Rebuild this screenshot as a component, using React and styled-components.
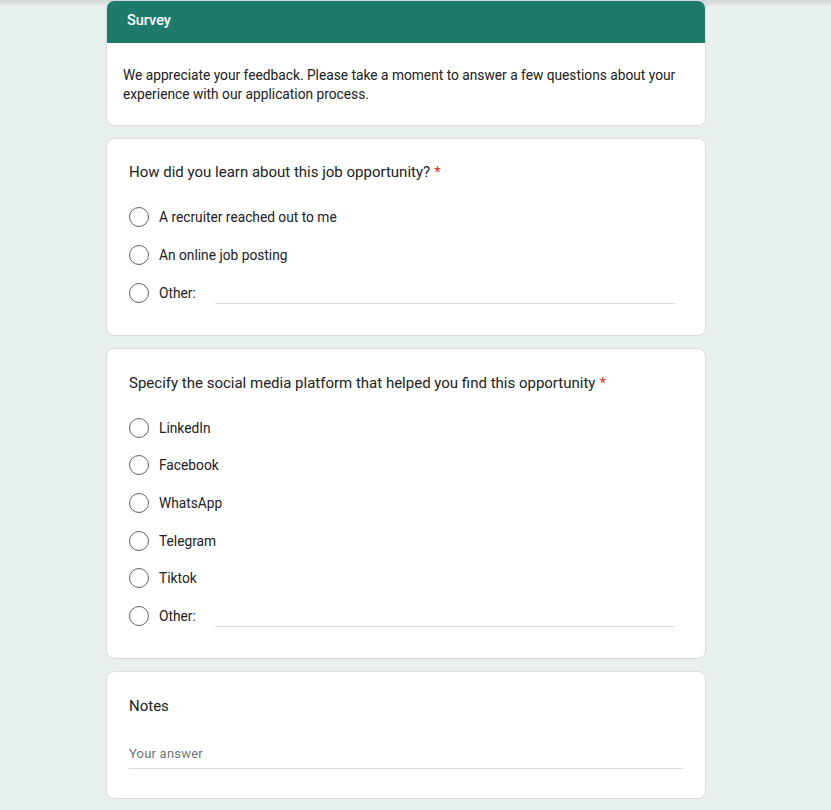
import React from 'react'
import styled, { createGlobalStyle } from 'styled-components'

const GlobalStyle = createGlobalStyle`
  html {
    background: #e8f0ef linear-gradient(#cfd6d5 0, #e8f0ef 7px) no-repeat;
    min-height: 100%;
  }
  body {
    margin: 0;
    padding: 0;
    font-family: Roboto, "Liberation Sans", Arial, sans-serif;
    color: #202124;
  }
`

const Page = styled.div`
  width: 600px;
  margin-left: 106px;
  display: flex;
  flex-direction: column;
  gap: 12px;
  padding-bottom: 12px;
`

const Card = styled.div`
  background: #fff;
  border: 1px solid #dadce0;
  border-radius: 8px;
  box-sizing: border-box;
  overflow: hidden;
`

const HeaderBar = styled.div`
  background: #1e7b6b;
  color: #fff;
  height: 43px;
  display: flex;
  align-items: center;
  padding: 0 21px 2px;
  box-sizing: border-box;
  font-size: 14.5px;
  font-weight: 500;
  margin: -1px -1px 0;
`

const Description = styled.p`
  margin: 0;
  padding: 23px 16px 21px;
  font-size: 13.75px;
  line-height: 19px;
  color: #202124;
`

const Question = styled(Card)`
  padding: ${p => p.$top || 23}px 22px ${p => p.$bottom || 23}px;
`

const Title = styled.div`
  font-size: 15px;
  line-height: 20px;
  color: #202124;
  margin-bottom: ${p => p.$gap || 15}px;
`

const Star = styled.span`
  color: #d93025;
  margin-left: 4px;
`

const Options = styled.div`
  display: flex;
  flex-direction: column;
`

const Option = styled.label`
  display: flex;
  align-items: center;
  height: ${p => p.$h || 38}px;
  font-size: 13.75px;
  color: #202124;
`

const Radio = styled.span`
  width: 20px;
  height: 20px;
  box-sizing: border-box;
  border: 1.6px solid #5f6368;
  border-radius: 50%;
  margin-right: 10px;
  flex-shrink: 0;
`

const OtherLine = styled.span`
  flex: 1;
  align-self: stretch;
  margin: 0 8px 8px 19px;
  border-bottom: 1px solid #dadce0;
`

const Answer = styled.div`
  margin-top: 30px;
  padding-bottom: 7px;
  border-bottom: 1px solid #dadce0;
  font-size: 13px;
  color: #70757a;
  letter-spacing: 0.2px;
`

const RadioGroup = ({ items, h }) => (
  <Options>
    {items.map(item => (
      <Option key={item} $h={h}>
        <Radio />
        {item}
        {item === 'Other:' && <OtherLine />}
      </Option>
    ))}
  </Options>
)

const App = () => (
  <>
    <GlobalStyle />
    <Page>
      <Card>
        <HeaderBar>Survey</HeaderBar>
        <Description>
          We appreciate your feedback. Please take a moment to answer a few questions about your
          experience with our application process.
        </Description>
      </Card>

      <Question $bottom={23}>
        <Title $gap={16}>
          How did you learn about this job opportunity?<Star>*</Star>
        </Title>
        <RadioGroup items={['A recruiter reached out to me', 'An online job posting', 'Other:']} />
      </Question>

      <Question $top={24} $bottom={23}>
        <Title $gap={16}>
          Specify the social media platform that helped you find this opportunity<Star>*</Star>
        </Title>
        <RadioGroup
          items={['LinkedIn', 'Facebook', 'WhatsApp', 'Telegram', 'Tiktok', 'Other:']}
          h={37.6}
        />
      </Question>

      <Question $top={24} $bottom={29}>
        <Title>Notes</Title>
        <Answer>Your answer</Answer>
      </Question>
    </Page>
  </>
)

export default App
